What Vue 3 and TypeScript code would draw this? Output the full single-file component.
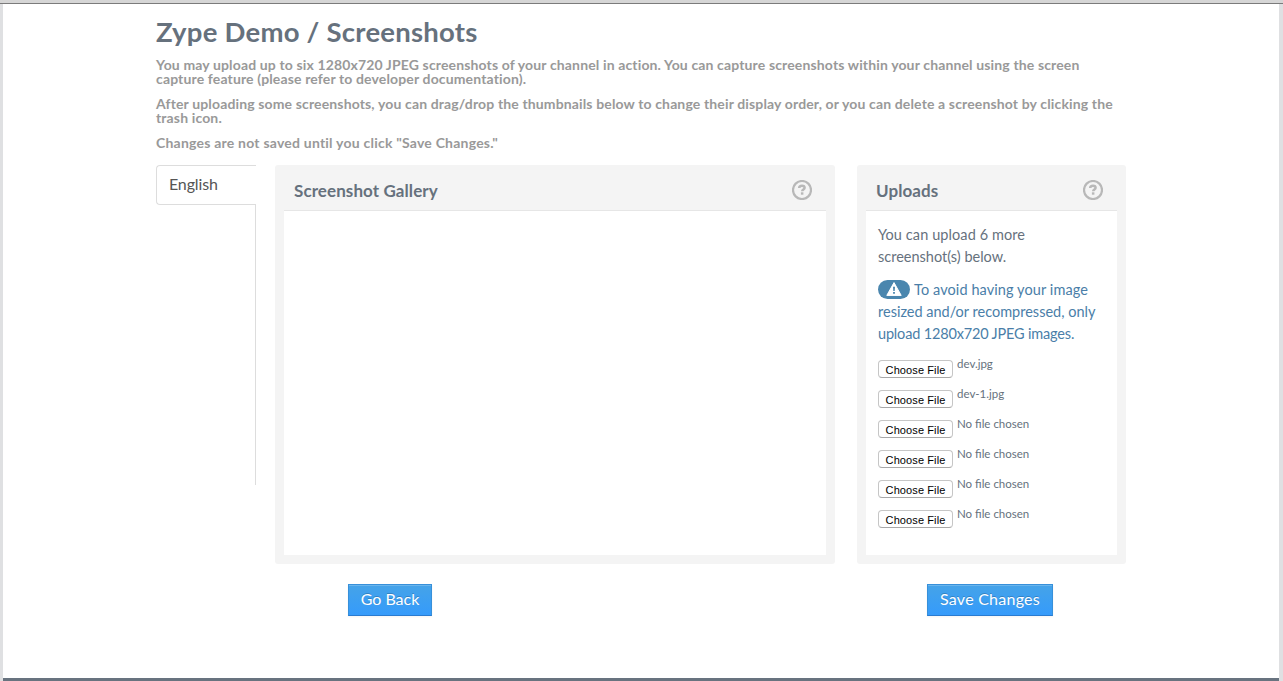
<script setup lang="ts">
const notes: string[][] = [
  [
    'You may upload up to six 1280x720 JPEG screenshots of your channel in action. You can capture screenshots within your channel using the screen',
    'capture feature (please refer to developer documentation).',
  ],
  [
    'After uploading some screenshots, you can drag/drop the thumbnails below to change their display order, or you can delete a screenshot by clicking the',
    'trash icon.',
  ],
  ['Changes are not saved until you click "Save Changes."'],
]

const files: string[] = [
  'dev.jpg',
  'dev-1.jpg',
  'No file chosen',
  'No file chosen',
  'No file chosen',
  'No file chosen',
]
</script>

<template>
  <div class="frame">
    <main class="page">
      <h1 class="title">Zype Demo / Screenshots</h1>
      <p v-for="(note, i) in notes" :key="i" class="note">
        <span v-for="line in note" :key="line" class="line">{{ line }}</span>
      </p>

      <div class="columns">
        <nav class="tabs">
          <a class="tab">English</a>
          <div class="rail"></div>
        </nav>

        <section class="panel gallery">
          <header class="panel-head">
            <h2>Screenshot Gallery</h2>
            <svg class="help" viewBox="0 0 20 20">
              <circle cx="10" cy="10" r="9" fill="none" stroke="#b8b8b8" stroke-width="2.2" />
              <path d="M7.2 8.1C7.2 6.4 8.4 5.7 10 5.7s2.6.9 2.6 2.1c0 1.7-2.4 1.6-2.4 3.4" fill="none" stroke="#b8b8b8" stroke-width="2.5" />
              <rect x="8.9" y="12.3" width="2.5" height="2.4" fill="#b8b8b8" />
            </svg>
          </header>
          <div class="panel-body"></div>
        </section>

        <section class="panel uploads">
          <header class="panel-head">
            <h2>Uploads</h2>
            <svg class="help" viewBox="0 0 20 20">
              <circle cx="10" cy="10" r="9" fill="none" stroke="#b8b8b8" stroke-width="2.2" />
              <path d="M7.2 8.1C7.2 6.4 8.4 5.7 10 5.7s2.6.9 2.6 2.1c0 1.7-2.4 1.6-2.4 3.4" fill="none" stroke="#b8b8b8" stroke-width="2.5" />
              <rect x="8.9" y="12.3" width="2.5" height="2.4" fill="#b8b8b8" />
            </svg>
          </header>
          <div class="panel-body upload-body">
            <p class="info">
              <span class="line airy">You can upload 6 more</span>
              <span class="line">screenshot(s) below.</span>
            </p>
            <p class="info hint">
              <span class="line first airy">
                <span class="badge">
                  <svg viewBox="0 0 16 14" width="16" height="14">
                    <path d="M8 .6 15.2 13.4H.8Z" fill="#fff" stroke="#fff" stroke-width="1" stroke-linejoin="round" />
                    <path d="M7 4.8h2L8.7 9H7.3ZM7.1 10h1.8v1.7H7.1Z" fill="#4a86ae" />
                  </svg>
                </span>
                <span>To avoid having your image</span>
              </span>
              <span class="line">resized and/or recompressed, only</span>
              <span class="line tight">upload 1280x720 JPEG images.</span>
            </p>
            <div v-for="(file, i) in files" :key="i" class="file-row">
              <button class="choose" type="button">Choose File</button>
              <span class="file-name">{{ file }}</span>
            </div>
          </div>
        </section>
      </div>

      <div class="actions">
        <button class="action" type="button">Go Back</button>
        <button class="action wide" type="button">Save Changes</button>
      </div>
    </main>
  </div>
</template>

<style>
body {
  margin: 0;
  background: #fff;
}
</style>

<style scoped>
.frame {
  box-sizing: border-box;
  width: 1283px;
  height: 681px;
  overflow: hidden;
  border-left: 3px solid #dfe0e2;
  border-right: 4px solid #dfe0e2;
  background:
    linear-gradient(#d6d6d6 0 3px, #7b7b7b 3px 4px, transparent 4px) border-box,
    linear-gradient(#68737f, #68737f) 0 100% / 100% 3px no-repeat padding-box,
    #fff;
  border-image: linear-gradient(#d6d6d6 0 3px, #7b7b7b 3px 4px, #dfe0e2 4px) 0 4 0 3;
  font-family: Lato, "Liberation Sans", sans-serif;
  color: #66717d;
}
.page {
  width: 970px;
  margin-left: 153px;
  padding-top: 15px;
}
.title {
  margin: 0;
  height: 43px;
  font-size: 27.5px;
  line-height: 34px;
  font-weight: 700;
  letter-spacing: 0.23px;
  white-space: nowrap;
}
.note {
  margin: 0 0 11px;
  font-size: 14px;
  line-height: 14px;
  font-weight: 700;
  letter-spacing: 0.138px;
  color: #999;
}
.note:nth-of-type(3) {
  letter-spacing: 0.22px;
}
.line {
  display: block;
  white-space: nowrap;
}
.columns {
  display: flex;
  margin-top: 15px;
  height: 399px;
}
.tabs {
  width: 100px;
  margin-right: 19px;
}
.tab {
  display: block;
  box-sizing: border-box;
  height: 40px;
  padding-left: 12px;
  border: 1px solid #ddd;
  border-right: 0;
  border-radius: 4px 0 0 4px;
  font-size: 16px;
  line-height: 36px;
  letter-spacing: -0.15px;
  color: #555;
}
.rail {
  height: 280px;
  border-right: 1px solid #ddd;
}
.panel {
  box-sizing: border-box;
  padding: 0 9px 9px;
  background: #f4f4f4;
  border-radius: 3px;
  display: flex;
  flex-direction: column;
}
.gallery {
  width: 560px;
  margin-right: 22px;
}
.uploads {
  width: 269px;
}
.panel-head {
  display: flex;
  justify-content: space-between;
  height: 45px;
  padding: 0 14px 0 10px;
  border-bottom: 1px solid #e6e6e6;
}
.panel-head h2 {
  margin: 0;
  font-size: 17px;
  line-height: 52px;
  font-weight: 700;
  letter-spacing: 0.09px;
  white-space: nowrap;
}
.help {
  width: 20px;
  height: 20px;
  margin-top: 15px;
}
.panel-body {
  flex: 1;
  background: #fff;
}
.upload-body {
  padding: 12px 0 0 12px;
}
.info {
  margin: 0 0 11px;
  font-size: 14.5px;
  line-height: 22px;
}
.info .line:not(.first),
.first > span:last-child {
  position: relative;
  top: 1px;
}
.airy {
  letter-spacing: 0.09px;
}
.tight {
  letter-spacing: -0.17px;
}
.hint {
  color: #4a7ea8;
  margin-bottom: 16px;
}
.first {
  display: flex;
  align-items: center;
  height: 22px;
}
.badge {
  display: flex;
  align-items: center;
  justify-content: center;
  width: 32px;
  height: 19px;
  margin-right: 4px;
  border-radius: 9.5px;
  background: #4a86ae;
}
.file-row {
  display: flex;
  height: 30px;
}
.choose {
  box-sizing: border-box;
  width: 75px;
  height: 18px;
  margin: 0 4px 0 0;
  padding: 1px 0 0;
  border: 1px solid #c6c6c6;
  border-bottom-color: #a8a8a8;
  border-radius: 4px;
  background: #fff;
  color: #000;
  font: 11px/16px "Liberation Sans", Arial, sans-serif;
  letter-spacing: 0.1px;
  white-space: nowrap;
}
.file-name {
  margin-top: -3px;
  font-size: 11.5px;
  line-height: 14px;
  white-space: nowrap;
}
.actions {
  display: flex;
  margin-top: 20px;
  padding-left: 192px;
}
.action {
  box-sizing: border-box;
  width: 84px;
  height: 32px;
  padding: 0 0 2px;
  border: 1px solid #3790da;
  border-bottom-color: #2a7bd0;
  background: linear-gradient(#45a3e8, #359bfb);
  box-shadow: inset 0 1px 0 rgba(255, 255, 255, 0.2), 0 1px 2px rgba(0, 0, 0, 0.05);
  color: #fff;
  font: 16px/28px Lato, "Liberation Sans", sans-serif;
  text-shadow: 0 -1px 0 rgba(0, 0, 0, 0.2);
  white-space: nowrap;
}
.wide {
  width: 126px;
  margin-left: 495px;
  letter-spacing: 0.25px;
}
</style>
